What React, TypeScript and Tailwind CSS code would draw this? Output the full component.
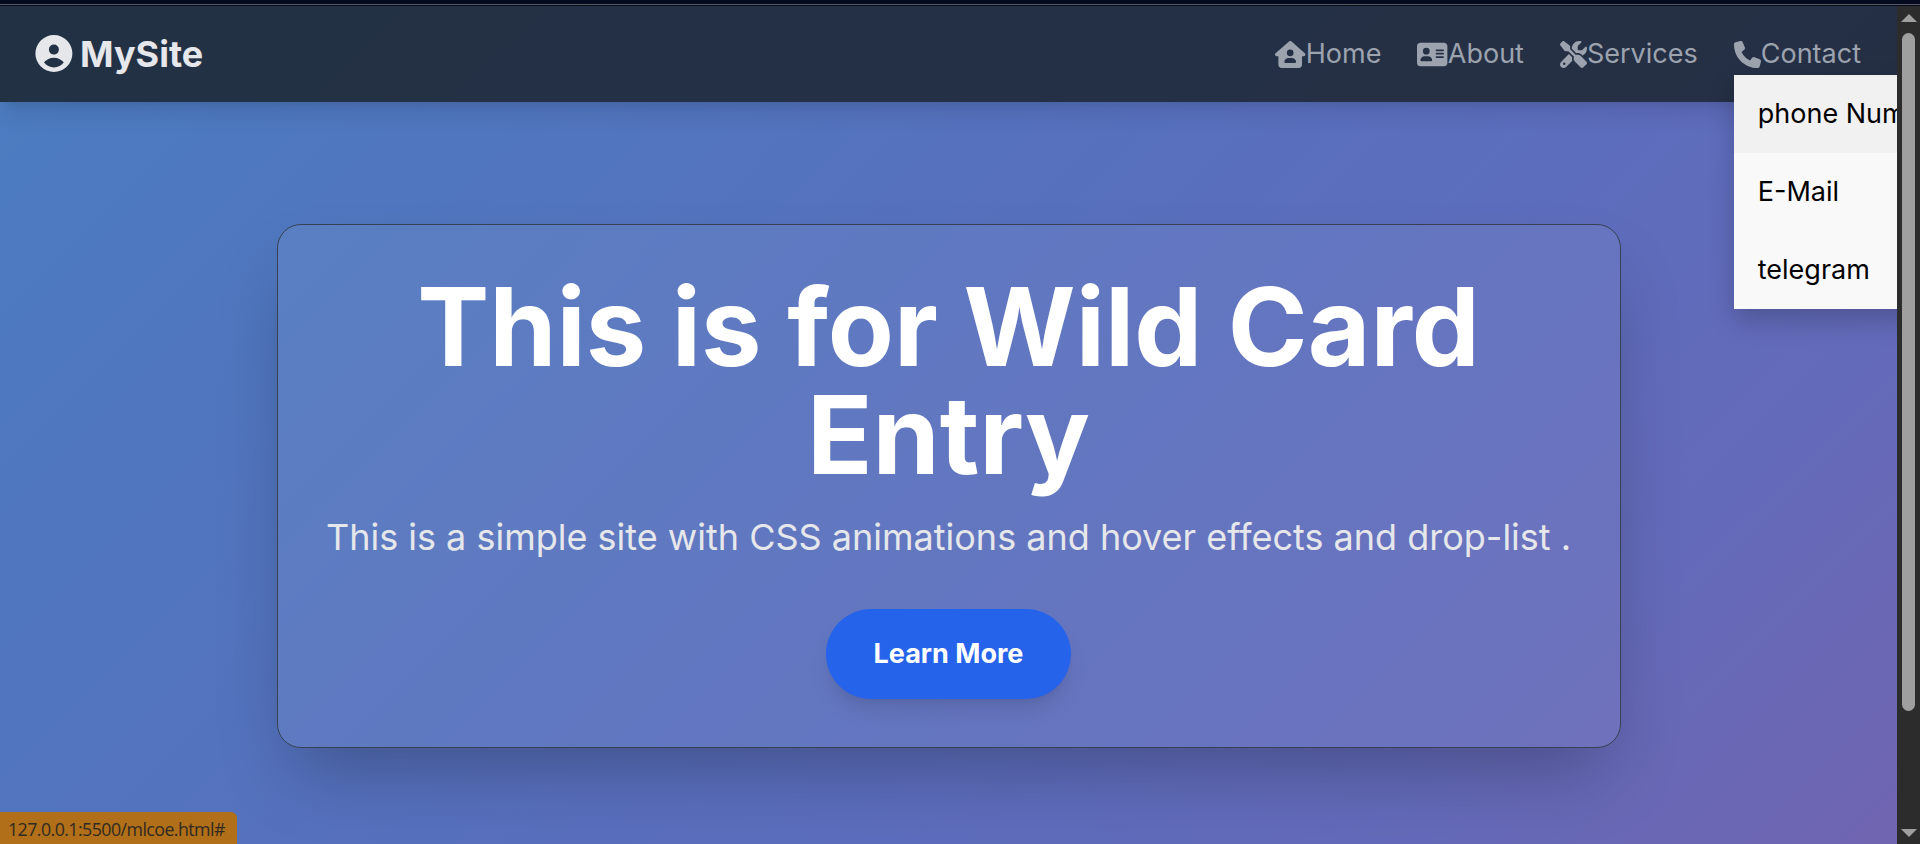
import type { ReactNode } from "react";
import { FaAddressCard, FaHouseUser, FaPhone, FaScrewdriverWrench } from "react-icons/fa6";

function LogoMark() {
  return (
    <svg viewBox="0 0 38 38" className="size-[38px]" fill="currentColor" aria-hidden="true">
      <path
        fillRule="evenodd"
        d="M18.900 0a18.500 18.500 0 1 1 0 37a18.500 18.500 0 0 1 0-37ZM18.900 9.600a5 5 0 1 0 0 10a5 5 0 0 0 0-10ZM9 27.300C11.300 30.600 14.900 32.500 18.900 32.500s7.600-1.900 9.900-5.200C26.300 24.400 22.900 22.700 18.900 22.700s-7.400 1.700-9.900 4.600Z"
      />
    </svg>
  );
}

function NavLink({ icon, label }: { icon: ReactNode; label: string }) {
  return (
    <a className="flex items-center text-[#9ca3af]">
      {icon}
      <span>{label}</span>
    </a>
  );
}

const contactItems = ["phone Number", "E-Mail", "telegram"];

function ContactMenu() {
  return (
    <div className="absolute top-[52px] left-0 z-20 w-[240px] bg-[#f9f9f9] text-black shadow-[0_12px_24px_rgba(0,0,0,0.2)]">
      {contactItems.map((item, i) => (
        <a
          key={item}
          className={
            i === 0
              ? "block bg-[#f1f1f1] px-6 py-[18px] whitespace-nowrap"
              : "block px-6 py-[18px] whitespace-nowrap"
          }
        >
          {item}
        </a>
      ))}
    </div>
  );
}

function Header() {
  return (
    <header className="relative z-10 flex h-24 shrink-0 items-center justify-between bg-[#1f2937]/90 px-9 shadow-[0_15px_22px_-4px_rgba(0,0,0,0.1),0_6px_9px_-6px_rgba(0,0,0,0.1)]">
      <div className="-ml-px flex items-center gap-[7px] text-[36px] leading-[48px] font-bold text-[#e5e7eb]">
        <LogoMark />
        <span>MySite</span>
      </div>
      <nav className="flex h-full items-start gap-9 pt-[27px] text-[27px] leading-[42px]">
        <NavLink icon={<FaHouseUser className="h-[27px] w-[30.400px]" />} label="Home" />
        <NavLink icon={<FaAddressCard className="h-[27px] w-[30.400px]" />} label="About" />
        <NavLink icon={<FaScrewdriverWrench className="size-[27px]" />} label="Services" />
        <div className="relative -mt-[10px] pt-[10px]">
          <NavLink icon={<FaPhone className="size-[27px]" />} label="Contact" />
          <ContactMenu />
        </div>
      </nav>
    </header>
  );
}

function Hero() {
  return (
    <main className="flex flex-1 justify-center pt-[122px]">
      <section className="flex h-[524px] w-[1344px] flex-col items-center rounded-[24px] border border-[#374151] bg-white/6 px-[47px] pt-12 text-center shadow-[0_38px_75px_-18px_rgba(0,0,0,0.27)]">
        <h1 className="mb-6 text-[108px] leading-[108px] font-bold text-white">
          This is for Wild Card Entry
        </h1>
        <p className="mb-12 text-[36px] leading-[48px] whitespace-nowrap text-[#e5e7eb]">
          This is a simple site with CSS animations and hover effects and drop-list .
        </p>
        <button className="rounded-full bg-[#2563eb] px-12 py-6 text-[27px] leading-[42px] font-bold text-white shadow-[0_15px_22px_-4px_rgba(0,0,0,0.1),0_6px_9px_-6px_rgba(0,0,0,0.1)]">
          Learn More
        </button>
      </section>
    </main>
  );
}

function Scrollbar() {
  return (
    <div className="flex w-[23px] shrink-0 flex-col items-center bg-[#2c2c2c] pt-2 pb-[7px]">
      <svg viewBox="0 0 16 8" className="h-2 w-4 shrink-0 fill-[#9f9f9f]">
        <path d="M8 0l8 8H0Z" />
      </svg>
      <div className="mt-[11px] h-[678px] w-[13px] rounded-full bg-[#9f9f9f]" />
      <div className="flex-1" />
      <svg viewBox="0 0 16 8" className="h-2 w-4 shrink-0 fill-[#9f9f9f]">
        <path d="M8 8l8-8H0Z" />
      </svg>
    </div>
  );
}

export default function App() {
  return (
    <div className="relative flex h-[844px] w-[1920px] flex-col overflow-hidden font-[Inter,sans-serif]">
      <div className="h-[6px] shrink-0 bg-[#040b1f] pt-1">
        <div className="h-px bg-[#56585c]" />
      </div>
      <div className="flex min-h-0 flex-1">
        <div className="flex min-w-0 flex-1 flex-col overflow-hidden bg-[linear-gradient(135deg,#4b7dc1_0%,#5076bf_22%,#5671be_42%,#5c6dbd_62%,#646ab9_82%,#7065b1_100%)]">
          <Header />
          <Hero />
        </div>
        <Scrollbar />
      </div>
      <div className="absolute bottom-0 left-0 z-30 h-8 w-[237px] rounded-tr-[6px] bg-[#b06f18] pl-2 font-['Open_Sans',sans-serif] text-[17.800px] leading-[34px] tracking-[-0.56px] whitespace-nowrap text-[#302a22]">
        127.0.0.1:5500/mlcoe.html#
      </div>
    </div>
  );
}
